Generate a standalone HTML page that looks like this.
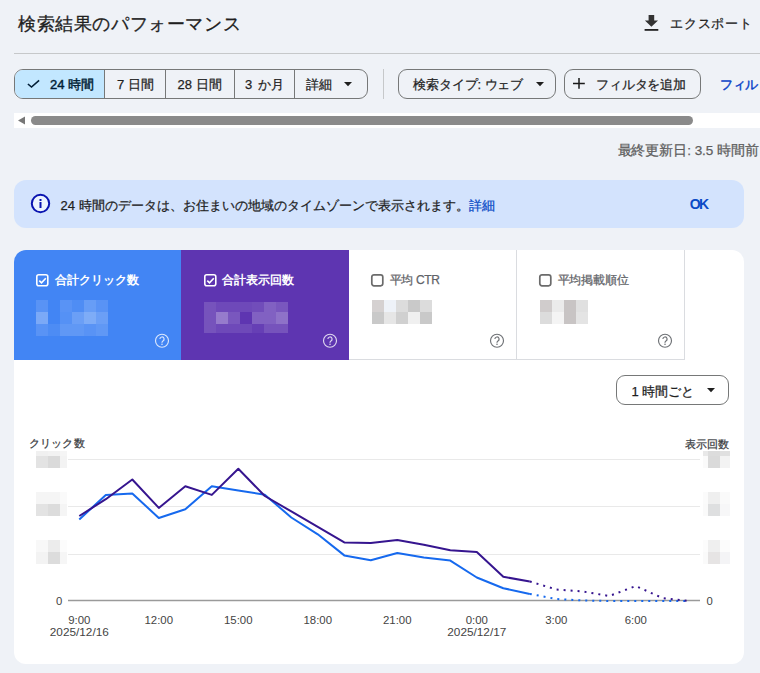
<!DOCTYPE html>
<html><head><meta charset="utf-8">
<style>
html,body{margin:0;padding:0;}
body{width:760px;height:673px;overflow:hidden;background:#eff2f7;font-family:"Liberation Sans",sans-serif;color:#1f1f1f;position:relative;}
.a{position:absolute;white-space:nowrap;line-height:1;}
.t{-webkit-text-stroke:0.25px currentColor;}
.seg{position:absolute;top:69px;height:30px;box-sizing:border-box;border:1px solid #767878;border-radius:9px;left:14px;width:354px;overflow:hidden;}
.seg div{position:absolute;top:0;bottom:0;border-left:1px solid #767878;}
.btn{position:absolute;top:69px;height:30px;box-sizing:border-box;border:1px solid #767878;border-radius:9px;}
.card{position:absolute;left:14px;top:250px;width:730px;height:414px;background:#fff;border-radius:12px;overflow:hidden;}
.tab{position:absolute;top:0;height:110px;}
.blk{position:absolute;}
</style></head><body>
<div class="a t" style="left:18px;top:15px;font-size:18.4px;letter-spacing:0.6px;-webkit-text-stroke:0.3px;">検索結果のパフォーマンス</div>
<svg class="a" style="left:643px;top:14px" width="17" height="18" viewBox="0 0 17 18"><path d="M5.6 1H11.2V6.4H15L8.4 12.8 1.9 6.4H5.6z" fill="#333"/><rect x="1.6" y="15" width="13.7" height="1.8" fill="#222"/></svg>
<div class="a t" style="left:670px;top:17px;font-size:13px;letter-spacing:0.8px;">エクスポート</div>
<div class="a" style="left:14px;width:746px;top:53px;height:1px;background:#c6c8ca;"></div>

<div class="seg">
  <div style="left:0;width:89px;border-left:none;background:#c2e7ff;"></div>
  <div style="left:89px;width:61px;"></div>
  <div style="left:150px;width:69px;"></div>
  <div style="left:219px;width:60px;"></div>
  <div style="left:279px;width:80px;"></div>
</div>
<svg class="a" style="left:26px;top:77px" width="15" height="12" viewBox="0 0 15 12"><path d="M1.9 7l3.6 3L13.1 3.3" fill="none" stroke="#001d35" stroke-width="1.6"/></svg>
<div class="a t" style="left:50px;top:78px;font-size:13px;-webkit-text-stroke:0.42px;color:#001d35;">24 時間</div>
<div class="a t" style="left:117px;top:78px;font-size:13px;letter-spacing:-0.1px;">7 日間</div>
<div class="a t" style="left:177.5px;top:78px;font-size:13px;">28 日間</div>
<div class="a t" style="left:245px;top:78px;font-size:13px;letter-spacing:0.85px;">3 か月</div>
<div class="a t" style="left:306px;top:78px;font-size:13px;letter-spacing:0.4px;">詳細</div>
<svg class="a" style="left:344.2px;top:81.7px" width="8" height="5"><path d="M0 0h8L4 4.2z" fill="#1f1f1f"/></svg>
<div class="a" style="left:383px;top:69px;width:1px;height:30px;background:#c6c8ca;"></div>

<div class="btn" style="left:398px;width:158px;"></div>
<div class="a t" style="left:413px;top:78px;font-size:13px;letter-spacing:-0.1px;">検索タイプ: ウェブ</div>
<svg class="a" style="left:536px;top:81.7px" width="8" height="5"><path d="M0 0h8L4 4.2z" fill="#1f1f1f"/></svg>
<div class="btn" style="left:564px;width:137px;"></div>
<svg class="a" style="left:573.4px;top:78.3px" width="12" height="11"><path d="M6 0v10.7M0 5.4h11.8" stroke="#1a1a1a" stroke-width="1.5"/></svg>
<div class="a t" style="left:596px;top:78px;font-size:13px;letter-spacing:-0.15px;">フィルタを追加</div>
<div class="a t" style="left:720px;top:78px;font-size:13px;letter-spacing:-0.3px;-webkit-text-stroke:0.45px;color:#0a42c8;">フィル</div>

<div class="a" style="left:14px;top:113px;width:746px;height:14.5px;background:#fff;"></div>
<svg class="a" style="left:17px;top:116px" width="9" height="10"><path d="M1 4.5L8 0.5v8z" fill="#777"/></svg>
<div class="a" style="left:30.5px;top:116px;width:662.5px;height:9px;background:#8a8a8a;border-radius:5px;"></div>

<div class="a t" style="left:617.5px;top:143.5px;font-size:13.5px;letter-spacing:-0.05px;color:#5e5e5e;">最終更新日: 3.5 時間前</div>

<div class="a" style="left:14px;top:180px;width:730px;height:48px;background:#d3e3fd;border-radius:12px;"></div>
<svg class="a" style="left:30px;top:193px" width="21" height="21" viewBox="0 0 21 21"><circle cx="10.5" cy="10.5" r="8.7" fill="#fff" fill-opacity="0.6" stroke="#0a14b0" stroke-width="2"/><rect x="9.5" y="6" width="2" height="2" fill="#0a14b0"/><rect x="9.5" y="9" width="2" height="6" fill="#0a14b0"/></svg>
<div class="a t" style="left:60.5px;top:199px;font-size:13px;">24 時間のデータは、お住まいの地域のタイムゾーンで表示されます。<span style="color:#0a4ac6;">詳細</span></div>
<div class="a" style="left:689.7px;top:196.7px;font-size:14px;font-weight:700;letter-spacing:-1.6px;color:#0a4ac6;">OK</div>

<div class="card">
  <div class="tab" style="left:0;width:167px;background:#4285f4;"></div>
  <div class="tab" style="left:167px;width:168px;background:#5e35b1;"></div>
  <div class="tab" style="left:335px;width:168px;border-right:1px solid #dadce0;border-bottom:1px solid #dadce0;box-sizing:border-box;height:110px;"></div>
  <div class="tab" style="left:503px;width:168px;border-right:1px solid #dadce0;border-bottom:1px solid #dadce0;box-sizing:border-box;height:110px;"></div>
</div>
<svg class="a" style="left:35px;top:273px" width="15" height="15" viewBox="0 0 15 15"><rect x="1.8" y="1.8" width="11" height="11" rx="2" fill="none" stroke="#fff" stroke-width="1.6"/><path d="M4.3 7.6l2.2 2.2 4.3-4.6" fill="none" stroke="#fff" stroke-width="1.6"/></svg>
<div class="a" style="left:54.5px;top:274px;font-size:12px;font-weight:700;color:#fff;">合計クリック数</div>
<svg class="a" style="left:154px;top:333px" width="16" height="16" viewBox="0 0 16 16"><circle cx="8" cy="7.7" r="6.5" fill="none" stroke="rgba(255,255,255,0.8)" stroke-width="1.15"/><path d="M5.9 6.1a2.1 2.1 0 1 1 3.1 1.8c-.7.4-1 .8-1 1.5v.4" fill="none" stroke="rgba(255,255,255,0.8)" stroke-width="1.2"/><circle cx="8" cy="11.3" r=".8" fill="rgba(255,255,255,0.8)"/></svg>
<svg class="a" style="left:203px;top:273px" width="15" height="15" viewBox="0 0 15 15"><rect x="1.8" y="1.8" width="11" height="11" rx="2" fill="none" stroke="#fff" stroke-width="1.6"/><path d="M4.3 7.6l2.2 2.2 4.3-4.6" fill="none" stroke="#fff" stroke-width="1.6"/></svg>
<div class="a" style="left:222px;top:274px;font-size:12px;font-weight:700;color:#fff;">合計表示回数</div>
<svg class="a" style="left:322px;top:333px" width="16" height="16" viewBox="0 0 16 16"><circle cx="8" cy="7.7" r="6.5" fill="none" stroke="rgba(255,255,255,0.8)" stroke-width="1.15"/><path d="M5.9 6.1a2.1 2.1 0 1 1 3.1 1.8c-.7.4-1 .8-1 1.5v.4" fill="none" stroke="rgba(255,255,255,0.8)" stroke-width="1.2"/><circle cx="8" cy="11.3" r=".8" fill="rgba(255,255,255,0.8)"/></svg>
<svg class="a" style="left:370px;top:273px" width="15" height="15" viewBox="0 0 15 15"><rect x="1.8" y="1.8" width="11" height="11" rx="2.2" fill="none" stroke="#6b6b6b" stroke-width="1.7"/></svg>
<div class="a t" style="left:389.8px;top:274px;font-size:12px;letter-spacing:-0.4px;color:#5f6368;">平均 CTR</div>
<svg class="a" style="left:489px;top:333px" width="16" height="16" viewBox="0 0 16 16"><circle cx="8" cy="7.7" r="6.5" fill="none" stroke="#6f7276" stroke-width="1.15"/><path d="M5.9 6.1a2.1 2.1 0 1 1 3.1 1.8c-.7.4-1 .8-1 1.5v.4" fill="none" stroke="#6f7276" stroke-width="1.2"/><circle cx="8" cy="11.3" r=".8" fill="#6f7276"/></svg>
<svg class="a" style="left:538px;top:273px" width="15" height="15" viewBox="0 0 15 15"><rect x="1.8" y="1.8" width="11" height="11" rx="2.2" fill="none" stroke="#6b6b6b" stroke-width="1.7"/></svg>
<div class="a t" style="left:557.7px;top:274px;font-size:12px;letter-spacing:-0.2px;color:#5f6368;">平均掲載順位</div>
<svg class="a" style="left:657px;top:333px" width="16" height="16" viewBox="0 0 16 16"><circle cx="8" cy="7.7" r="6.5" fill="none" stroke="#6f7276" stroke-width="1.15"/><path d="M5.9 6.1a2.1 2.1 0 1 1 3.1 1.8c-.7.4-1 .8-1 1.5v.4" fill="none" stroke="#6f7276" stroke-width="1.2"/><circle cx="8" cy="11.3" r=".8" fill="#6f7276"/></svg>
<div class="blk" style="left:36px;top:300px;width:12px;height:12px;background:rgba(255,255,255,0.12)"></div>
<div class="blk" style="left:60px;top:300px;width:12px;height:12px;background:rgba(255,255,255,0.12)"></div>
<div class="blk" style="left:72px;top:300px;width:12px;height:12px;background:rgba(255,255,255,0.07)"></div>
<div class="blk" style="left:84px;top:300px;width:12px;height:12px;background:rgba(255,255,255,0.2)"></div>
<div class="blk" style="left:96px;top:300px;width:12px;height:12px;background:rgba(255,255,255,0.12)"></div>
<div class="blk" style="left:36px;top:312px;width:12px;height:12px;background:rgba(255,255,255,0.3)"></div>
<div class="blk" style="left:60px;top:312px;width:12px;height:12px;background:rgba(255,255,255,0.1)"></div>
<div class="blk" style="left:72px;top:312px;width:12px;height:12px;background:rgba(255,255,255,0.22)"></div>
<div class="blk" style="left:84px;top:312px;width:12px;height:12px;background:rgba(255,255,255,0.32)"></div>
<div class="blk" style="left:96px;top:312px;width:12px;height:12px;background:rgba(255,255,255,0.22)"></div>
<div class="blk" style="left:36px;top:324px;width:12px;height:12px;background:rgba(255,255,255,0.12)"></div>
<div class="blk" style="left:48px;top:324px;width:12px;height:12px;background:rgba(255,255,255,0.06)"></div>
<div class="blk" style="left:60px;top:324px;width:12px;height:12px;background:rgba(255,255,255,0.16)"></div>
<div class="blk" style="left:72px;top:324px;width:12px;height:12px;background:rgba(255,255,255,0.16)"></div>
<div class="blk" style="left:84px;top:324px;width:12px;height:12px;background:rgba(255,255,255,0.12)"></div>
<div class="blk" style="left:96px;top:324px;width:12px;height:12px;background:rgba(255,255,255,0.16)"></div>
<div class="blk" style="left:204px;top:302px;width:12px;height:10px;background:rgba(255,255,255,0.15)"></div>
<div class="blk" style="left:216px;top:302px;width:12px;height:10px;background:rgba(255,255,255,0.1)"></div>
<div class="blk" style="left:228px;top:302px;width:12px;height:10px;background:rgba(255,255,255,0.1)"></div>
<div class="blk" style="left:240px;top:302px;width:12px;height:10px;background:rgba(255,255,255,0.1)"></div>
<div class="blk" style="left:252px;top:302px;width:12px;height:10px;background:rgba(255,255,255,0.12)"></div>
<div class="blk" style="left:264px;top:302px;width:12px;height:10px;background:rgba(255,255,255,0.22)"></div>
<div class="blk" style="left:276px;top:302px;width:12px;height:10px;background:rgba(255,255,255,0.17)"></div>
<div class="blk" style="left:204px;top:312px;width:12px;height:12px;background:rgba(255,255,255,0.15)"></div>
<div class="blk" style="left:216px;top:312px;width:12px;height:12px;background:rgba(255,255,255,0.35)"></div>
<div class="blk" style="left:228px;top:312px;width:12px;height:12px;background:rgba(255,255,255,0.17)"></div>
<div class="blk" style="left:252px;top:312px;width:12px;height:12px;background:rgba(255,255,255,0.22)"></div>
<div class="blk" style="left:264px;top:312px;width:12px;height:12px;background:rgba(255,255,255,0.22)"></div>
<div class="blk" style="left:276px;top:312px;width:12px;height:12px;background:rgba(255,255,255,0.3)"></div>
<div class="blk" style="left:204px;top:324px;width:12px;height:9px;background:rgba(255,255,255,0.15)"></div>
<div class="blk" style="left:216px;top:324px;width:12px;height:9px;background:rgba(255,255,255,0.1)"></div>
<div class="blk" style="left:228px;top:324px;width:12px;height:9px;background:rgba(255,255,255,0.1)"></div>
<div class="blk" style="left:240px;top:324px;width:12px;height:9px;background:rgba(255,255,255,0.1)"></div>
<div class="blk" style="left:252px;top:324px;width:12px;height:9px;background:rgba(255,255,255,0.05)"></div>
<div class="blk" style="left:264px;top:324px;width:12px;height:9px;background:rgba(255,255,255,0.15)"></div>
<div class="blk" style="left:276px;top:324px;width:12px;height:9px;background:rgba(255,255,255,0.15)"></div>
<div class="blk" style="left:372px;top:300px;width:12px;height:12px;background:#d5d1d1"></div>
<div class="blk" style="left:384px;top:300px;width:12px;height:12px;background:#eef2f8"></div>
<div class="blk" style="left:396px;top:300px;width:12px;height:12px;background:#dcdcdc"></div>
<div class="blk" style="left:408px;top:300px;width:12px;height:12px;background:#c9c9c9"></div>
<div class="blk" style="left:420px;top:300px;width:12px;height:12px;background:#dcdcdc"></div>
<div class="blk" style="left:372px;top:312px;width:12px;height:12px;background:#c9c9c9"></div>
<div class="blk" style="left:384px;top:312px;width:12px;height:12px;background:#e6e6e6"></div>
<div class="blk" style="left:396px;top:312px;width:12px;height:12px;background:#d0d0d0"></div>
<div class="blk" style="left:408px;top:312px;width:12px;height:12px;background:#f0f0f0"></div>
<div class="blk" style="left:420px;top:312px;width:12px;height:12px;background:#c9c9c9"></div>
<div class="blk" style="left:540px;top:300px;width:12px;height:12px;background:#d0cccc"></div>
<div class="blk" style="left:552px;top:300px;width:12px;height:12px;background:#ebebeb"></div>
<div class="blk" style="left:564px;top:300px;width:12px;height:12px;background:#c8c4c4"></div>
<div class="blk" style="left:576px;top:300px;width:12px;height:12px;background:#e0e0e0"></div>
<div class="blk" style="left:540px;top:312px;width:12px;height:12px;background:#dcdcdc"></div>
<div class="blk" style="left:552px;top:312px;width:12px;height:12px;background:#f4f4f4"></div>
<div class="blk" style="left:564px;top:312px;width:12px;height:12px;background:#c8c4c4"></div>
<div class="blk" style="left:576px;top:312px;width:12px;height:12px;background:#e4e4e4"></div>
<div class="blk" style="left:36px;top:451px;width:12px;height:5px;background:#f0f0f0"></div>
<div class="blk" style="left:48px;top:451px;width:12px;height:5px;background:#f2f2f2"></div>
<div class="blk" style="left:60px;top:451px;width:7px;height:5px;background:#f5f5f5"></div>
<div class="blk" style="left:36px;top:456px;width:12px;height:12px;background:#e3e3e3"></div>
<div class="blk" style="left:48px;top:456px;width:12px;height:12px;background:#dadada"></div>
<div class="blk" style="left:60px;top:456px;width:7px;height:12px;background:#f3f3f3"></div>
<div class="blk" style="left:36px;top:492px;width:12px;height:12px;background:#f5f5f5"></div>
<div class="blk" style="left:48px;top:492px;width:12px;height:12px;background:#f5f5f5"></div>
<div class="blk" style="left:60px;top:492px;width:7px;height:12px;background:#fafafa"></div>
<div class="blk" style="left:36px;top:504px;width:12px;height:12px;background:#e3e3e3"></div>
<div class="blk" style="left:48px;top:504px;width:12px;height:12px;background:#dcdcdc"></div>
<div class="blk" style="left:60px;top:504px;width:7px;height:12px;background:#f5f5f5"></div>
<div class="blk" style="left:36px;top:540px;width:12px;height:12px;background:#f8f8f8"></div>
<div class="blk" style="left:48px;top:540px;width:12px;height:12px;background:#ececec"></div>
<div class="blk" style="left:60px;top:540px;width:7px;height:12px;background:#fcfcfc"></div>
<div class="blk" style="left:36px;top:552px;width:12px;height:12px;background:#f3f3f3"></div>
<div class="blk" style="left:48px;top:552px;width:12px;height:12px;background:#dcdcdc"></div>
<div class="blk" style="left:60px;top:552px;width:7px;height:12px;background:#f6f6f6"></div>
<div class="blk" style="left:703px;top:451px;width:5px;height:5px;background:#e8e8e8"></div>
<div class="blk" style="left:708px;top:451px;width:12px;height:5px;background:#dcdcdc"></div>
<div class="blk" style="left:720px;top:451px;width:10px;height:5px;background:#e0e0e0"></div>
<div class="blk" style="left:703px;top:456px;width:5px;height:12px;background:#fafafa"></div>
<div class="blk" style="left:708px;top:456px;width:12px;height:12px;background:#dadada"></div>
<div class="blk" style="left:720px;top:456px;width:10px;height:12px;background:#f3f3f3"></div>
<div class="blk" style="left:703px;top:492px;width:5px;height:12px;background:#fbfbfb"></div>
<div class="blk" style="left:708px;top:492px;width:12px;height:12px;background:#efefef"></div>
<div class="blk" style="left:720px;top:492px;width:10px;height:12px;background:#fafafa"></div>
<div class="blk" style="left:703px;top:504px;width:5px;height:12px;background:#fafafa"></div>
<div class="blk" style="left:708px;top:504px;width:12px;height:12px;background:#dedfe0"></div>
<div class="blk" style="left:720px;top:504px;width:10px;height:12px;background:#f7f7f8"></div>
<div class="blk" style="left:703px;top:540px;width:5px;height:12px;background:#fcfcfc"></div>
<div class="blk" style="left:708px;top:540px;width:12px;height:12px;background:#efefef"></div>
<div class="blk" style="left:720px;top:540px;width:10px;height:12px;background:#fcfcfc"></div>
<div class="blk" style="left:703px;top:552px;width:5px;height:12px;background:#fafafa"></div>
<div class="blk" style="left:708px;top:552px;width:12px;height:12px;background:#e6e4e4"></div>
<div class="blk" style="left:720px;top:552px;width:10px;height:12px;background:#f4f4f6"></div>

<div class="btn" style="left:616px;top:375px;width:113px;"></div>
<div class="a t" style="left:631.6px;top:384.5px;font-size:13px;">1 時間ごと</div>
<svg class="a" style="left:706.5px;top:388.2px" width="8" height="5"><path d="M0 0h8L4 4.2z" fill="#1f1f1f"/></svg>

<div class="a t" style="left:28.5px;top:438px;font-size:11px;letter-spacing:0.3px;color:#3c4043;">クリック数</div>
<div class="a t" style="left:685.4px;top:438.5px;font-size:11px;color:#3c4043;">表示回数</div>
<svg class="a" style="left:0;top:0" width="760" height="673">
<path d="M68 459.5H700M68 506.5H700M68 554.5H700" stroke="#e9e9e9" stroke-width="1"/>
<path d="M68 600.5H700" stroke="#9a9a9a" stroke-width="1.3"/>
<polyline points="79.3,519.5 105.8,494.9 132.3,493.4 158.8,518.0 185.3,509.3 211.8,486.2 238.3,490.5 264.8,494.7 291.3,517.5 317.8,534.3 344.3,555.4 370.8,560.3 397.3,553.0 423.8,557.4 450.3,560.6 476.8,577.5 503.3,588.2 529.8,593.9" fill="none" stroke="#1669ee" stroke-width="2" stroke-linejoin="round"/>
<polyline points="79.3,516.0 105.8,499.2 132.3,479.5 158.8,507.9 185.3,486.2 211.8,494.9 238.3,468.8 264.8,496.0 291.3,511.4 317.8,526.9 344.3,542.4 370.8,543.0 397.3,540.0 423.8,544.8 450.3,550.3 476.8,552.0 503.3,576.8 529.8,581.5" fill="none" stroke="#36158f" stroke-width="2" stroke-linejoin="round"/>
<polyline points="529.8,593.9 556.3,599.0 582.8,600.5 609.3,601.0 635.8,601.0 662.3,601.0 688.8,601.0" fill="none" stroke="#1669ee" stroke-width="2" stroke-dasharray="2 5"/>
<polyline points="529.8,581.5 556.3,589.5 582.8,591.5 609.3,596.0 635.8,586.0 662.3,598.0 688.8,601.0" fill="none" stroke="#36158f" stroke-width="2" stroke-dasharray="2 5"/>
</svg>
<div class="a" style="left:56px;top:596px;font-size:11.3px;color:#444;">0</div>
<div class="a" style="left:706.5px;top:596px;font-size:11.3px;color:#444;">0</div>
<div class="a" style="left:39.3px;width:80px;text-align:center;top:615px;font-size:11.4px;color:#444;">9:00</div>
<div class="a" style="left:118.8px;width:80px;text-align:center;top:615px;font-size:11.4px;color:#444;">12:00</div>
<div class="a" style="left:198.3px;width:80px;text-align:center;top:615px;font-size:11.4px;color:#444;">15:00</div>
<div class="a" style="left:277.8px;width:80px;text-align:center;top:615px;font-size:11.4px;color:#444;">18:00</div>
<div class="a" style="left:357.3px;width:80px;text-align:center;top:615px;font-size:11.4px;color:#444;">21:00</div>
<div class="a" style="left:436.8px;width:80px;text-align:center;top:615px;font-size:11.4px;color:#444;">0:00</div>
<div class="a" style="left:516.3px;width:80px;text-align:center;top:615px;font-size:11.4px;color:#444;">3:00</div>
<div class="a" style="left:595.8px;width:80px;text-align:center;top:615px;font-size:11.4px;color:#444;">6:00</div>
<div class="a" style="left:39.3px;width:80px;text-align:center;top:627px;font-size:11.8px;color:#444;">2025/12/16</div>
<div class="a" style="left:436.8px;width:80px;text-align:center;top:627px;font-size:11.8px;color:#444;">2025/12/17</div>
</body></html>
